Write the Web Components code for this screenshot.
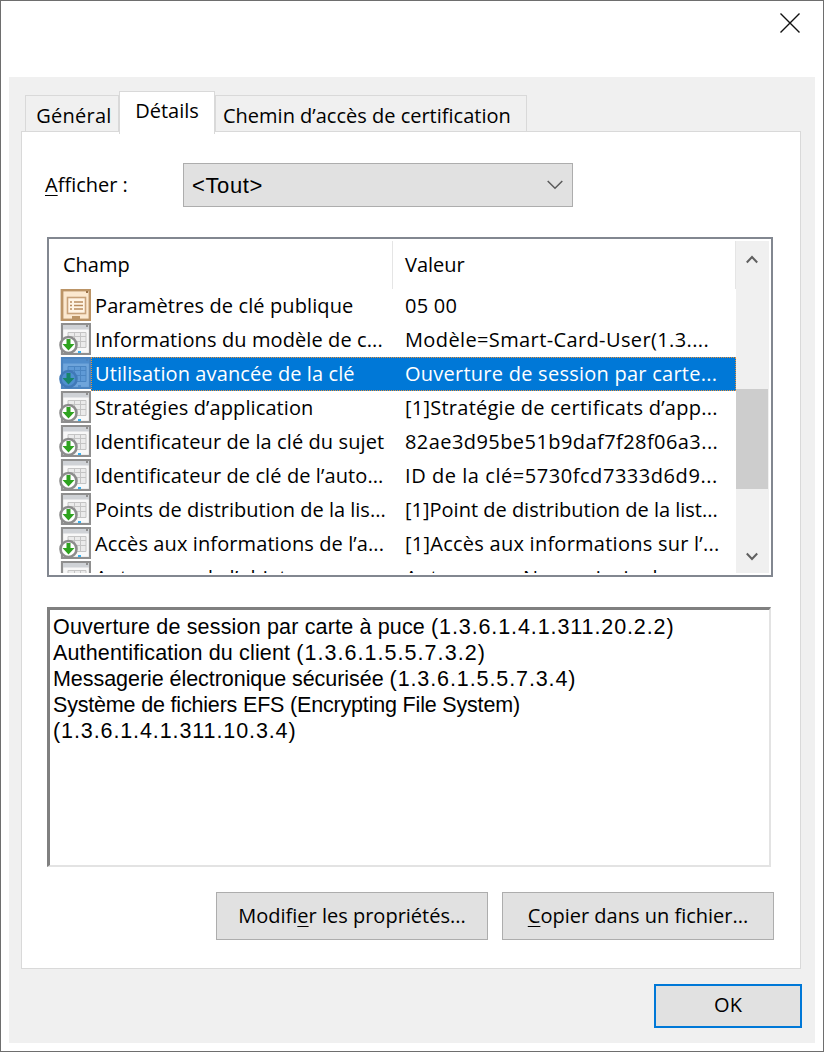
<!DOCTYPE html>
<html lang="fr"><head><meta charset="utf-8"><title>Certificat</title>
<style>
html,body{margin:0;padding:0;background:#fff;}
body{font-family:"Open Sans","Noto Sans",sans-serif;font-size:20px;color:#000;}
u{text-decoration-thickness:1px;text-underline-offset:3px;}
.n{letter-spacing:.9px;}
</style></head><body>
<template id="t-cert">
<style>
:host{display:block;width:824px;height:1052px;box-sizing:border-box;background:#fff;border:1px solid #6e6e6e;}
.title{height:76px;display:flex;justify-content:flex-end;align-items:flex-start;padding:12px 23px 0 0;box-sizing:border-box;}
.body{margin:0 8px;height:966px;background:#f0f0f0;box-sizing:border-box;padding:15px 14px 0 12px;display:flex;flex-direction:column;}
.footer{display:flex;justify-content:flex-end;margin-top:15px;margin-right:-1px;}
</style>
<div class="title"><svg width="20" height="20" viewBox="0 0 20 20"><path d="M.5.5l19 19M19.500.5l-19 19" stroke="#111" stroke-width="1.400" fill="none"/></svg></div>
<div class="body"><slot></slot><div class="footer"><slot name="footer"></slot></div></div>
</template>

<template id="t-tabs">
<style>
:host{display:flex;align-items:flex-end;height:40px;padding-left:4px;position:relative;z-index:1;margin-bottom:-1px;}
</style><slot></slot>
</template>

<template id="t-tab">
<style>
:host{display:flex;align-items:center;justify-content:center;box-sizing:border-box;height:36px;padding:3px 0 0 0;background:#f0f0f0;border:1px solid #d9d9d9;border-bottom:0;white-space:nowrap;margin-bottom:1px;}
:host([active]){height:43px;background:#fff;margin-bottom:-2px;padding:0 0 6px;position:relative;z-index:2;}
</style><slot></slot>
</template>

<template id="t-panel">
<style>
:host{display:block;box-sizing:border-box;height:838px;background:#fff;border:1px solid #d9d9d9;padding:31px 27px 0 25px;}
</style><slot></slot>
</template>

<template id="t-combo">
<style>
:host{display:flex;align-items:center;height:44px;margin-bottom:30px;}
.lab{width:138px;margin-left:-2px;flex:none;padding-bottom:2px;}
.box{width:390px;height:44px;box-sizing:border-box;background:#e1e1e1;border:1px solid #adadad;display:flex;align-items:center;justify-content:space-between;padding:2px 9px 0 8px;font:22px "Liberation Sans",Arial,sans-serif;letter-spacing:.6px;}
svg{margin-top:-2px;}
</style>
<span class="lab"><slot name="label"></slot></span>
<div class="box"><span><slot></slot></span>
<svg width="16" height="10" viewBox="0 0 16 10"><path d="M.7 1l7.300 7.300L15.300 1" fill="none" stroke="#5a5a5a" stroke-width="1.500"/></svg></div>
</template>

<template id="t-list">
<style>
:host{display:flex;box-sizing:border-box;width:726px;height:340px;border:2px solid #828790;padding:2px;margin-bottom:30px;background:#fff;overflow:hidden;}
.main{width:685px;flex:none;overflow:hidden;display:flex;flex-direction:column;}
.head{height:48px;flex:none;display:grid;grid-template-columns:342px 1fr;}
.head span{padding:0 0 2px 12px;box-sizing:border-box;height:48px;display:flex;align-items:center;border-right:1px solid #e5e5e5;}
.bar{width:33px;flex:none;background:#f0f0f0;position:relative;display:flex;flex-direction:column;justify-content:space-between;align-items:center;padding:14px 2px 12px 0;box-sizing:border-box;}
.thumb{position:absolute;left:0;top:148px;width:32px;height:100px;background:#cdcdcd;}
</style>
<div class="main"><div class="head"><span>Champ</span><span>Valeur</span></div><slot></slot></div>
<div class="bar">
<svg width="12" height="9" viewBox="0 0 12 9"><path d="M.8 7.500L6 2l5.200 5.500" fill="none" stroke="#606060" stroke-width="2"/></svg>
<div class="thumb"></div>
<svg width="12" height="9" viewBox="0 0 12 9"><path d="M.8 1.500L6 7l5.200-5.500" fill="none" stroke="#606060" stroke-width="2"/></svg>
</div>
</template>

<template id="t-row">
<style>
:host{display:block;height:34px;flex:none;color:#000;}
.r{display:grid;grid-template-columns:32px 1fr;height:34px;padding-left:8px;box-sizing:border-box;}
.ic{width:32px;height:32px;display:block;}
.txt{display:grid;grid-template-columns:300px 1fr;height:34px;align-items:center;padding:0 0 2px 4px;white-space:nowrap;box-sizing:border-box;letter-spacing:.1px;}
.txt span:last-child{padding-left:10px;letter-spacing:.25px;}
:host([selected]) .txt{background:#0078d7;color:#fff;outline:1px dotted #e8913a;outline-offset:-1px;}
</style>
<div class="r"><svg class="ic" viewBox="0 0 32 32"><g id="g"></g></svg>
<div class="txt"><span><slot name="f"></slot></span><span><slot name="v"></slot></span></div></div>
</template>

<template id="t-detail">
<style>
:host{display:block;box-sizing:border-box;width:724px;height:260px;background:#fff;border:solid;border-width:3px 2px 2px 3px;border-color:#808080 #e3e3e3 #e3e3e3 #808080;padding:4px 3px;font:21.5px/26px "Liberation Sans",Arial,sans-serif;margin-bottom:25px;}
</style><slot></slot>
</template>

<template id="t-actions">
<style>
:host{display:flex;justify-content:flex-end;gap:14px;margin-right:-1px;}
</style><slot></slot>
</template>

<template id="t-btn">
<style>
:host{display:flex;align-items:center;justify-content:center;box-sizing:border-box;width:272px;height:48px;background:#e1e1e1;border:1px solid #adadad;white-space:nowrap;padding-bottom:2px;}
:host([primary]){width:148px;height:44px;border:2px solid #0078d7;padding-bottom:3px;}
</style><slot></slot>
</template>

<cert-dialog>
  <cert-tabs>
    <cert-tab style="width:94px;letter-spacing:.25px;padding-left:4px">Général</cert-tab>
    <cert-tab active style="width:96px">Détails</cert-tab>
    <cert-tab style="width:312px;justify-content:flex-start;padding-left:7px">Chemin d’accès de certification</cert-tab>
  </cert-tabs>
  <cert-panel>
    <cert-combo><span slot="label"><u>A</u>fficher :</span>&lt;Tout&gt;</cert-combo>
    <field-list>
      <field-row kind="param"><span slot="f">Paramètres de clé publique</span><span slot="v">05 00</span></field-row>
      <field-row><span slot="f">Informations du modèle de c...</span><span slot="v" style="letter-spacing:.38px">Modèle=Smart-Card-User(1.3....</span></field-row>
      <field-row selected><span slot="f">Utilisation avancée de la clé</span><span slot="v">Ouverture de session par carte...</span></field-row>
      <field-row><span slot="f">Stratégies d’application</span><span slot="v">[1]Stratégie de certificats d’app...</span></field-row>
      <field-row><span slot="f">Identificateur de la clé du sujet</span><span slot="v" style="letter-spacing:.43px">82ae3d95be51b9daf7f28f06a3...</span></field-row>
      <field-row><span slot="f">Identificateur de clé de l’auto...</span><span slot="v" style="letter-spacing:.55px">ID de la clé=5730fcd7333d6d9...</span></field-row>
      <field-row><span slot="f" style="letter-spacing:0">Points de distribution de la lis...</span><span slot="v" style="letter-spacing:0">[1]Point de distribution de la list...</span></field-row>
      <field-row><span slot="f">Accès aux informations de l’a...</span><span slot="v">[1]Accès aux informations sur l’...</span></field-row>
      <field-row><span slot="f">Autre nom de l’objet</span><span slot="v">Autre nom : Nom principal=user...</span></field-row>
    </field-list>
    <detail-box><span style="letter-spacing:.17px">Ouverture de session par carte à puce</span> <span class="n">(1.3.6.1.4.1.311.20.2.2)</span><br><span style="letter-spacing:.16px">Authentification du client</span> <span class="n" style="letter-spacing:1.05px">(1.3.6.1.5.5.7.3.2)</span><br><span style="letter-spacing:-.05px">Messagerie électronique sécurisée</span> <span class="n">(1.3.6.1.5.5.7.3.4)</span><br><span style="letter-spacing:-.18px">Système de fichiers EFS (Encrypting File System)</span><br><span class="n">(1.3.6.1.4.1.311.10.3.4)</span></detail-box>
    <cert-actions><win-button><span>Modifi<u>e</u>r les propriétés...</span></win-button><win-button><span><u>C</u>opier dans un fichier...</span></win-button></cert-actions>
  </cert-panel>
  <win-button slot="footer" primary>OK</win-button>
</cert-dialog>

<script>
function simple(name,tid){customElements.define(name,class extends HTMLElement{constructor(){super();this.attachShadow({mode:'open'}).appendChild(document.getElementById(tid).content.cloneNode(true));}});}
[['cert-dialog','t-cert'],['cert-tabs','t-tabs'],['cert-tab','t-tab'],['cert-panel','t-panel'],['cert-combo','t-combo'],['field-list','t-list'],['detail-box','t-detail'],['cert-actions','t-actions'],['win-button','t-btn']].forEach(a=>simple(...a));
function certIcon(c){return `<rect x="3" y="1" width="28" height="30" fill="${c.paper}" stroke="${c.frame}" stroke-width="2.200"/><rect x="4" y="2" width="26" height="4.500" fill="${c.band}"/><rect x="27" y="2" width="2" height="2" fill="${c.frame}"/><path d="M9 9.500h18v15H9z" fill="${c.cell}" stroke="${c.line}"/><path d="M9 13.500h18M9 18.500h18M15.500 9.500v15M21.500 9.500v15" stroke="${c.line}"/><rect x="19" y="28" width="3" height="2" fill="${c.dot}"/><circle cx="9.500" cy="22" r="8" fill="${c.disc}" stroke="${c.ring}" stroke-width="2.600"/><path d="M7.500 16h4v5h4L9.500 27.500 3.500 21h4z" fill="${c.arrow}"/>`;}
const ICON_CERT=certIcon({paper:'#f8f8f8',frame:'#8f8f8f',band:'#cfd2d6',cell:'#ebebeb',line:'#c4c4c4',dot:'#39b0ee',disc:'#fff',ring:'#8c8c8c',arrow:'#2fa320'});
const ICON_SEL=certIcon({paper:'#6fa5db',frame:'#4c84bf',band:'#4f8ccb',cell:'#5f9ad6',line:'#4a85c2',dot:'#4f8ccb',disc:'#4f8fcf',ring:'#4079b8',arrow:'#17866a'});
const ICON_PARAM=`<rect x="3" y="1" width="28" height="30" fill="#fbe8cf" stroke="#bb9466" stroke-width="2.800"/><rect x="27" y="2" width="2" height="2" fill="#9a7348"/><rect x="8.500" y="8.500" width="18" height="16" fill="#fff4e4" stroke="#c8a27a" stroke-width="1.600"/><path d="M11 13h2M11 16.500h2M11 20h2M15 13h9M15 16.500h9M15 20h9" stroke="#b98c5e" stroke-width="1.600"/><path d="M13 27h8v4h-8z" fill="#bb9466"/>`;
customElements.define('field-row',class extends HTMLElement{constructor(){super();this.attachShadow({mode:'open'}).appendChild(document.getElementById('t-row').content.cloneNode(true));}
connectedCallback(){this.shadowRoot.getElementById('g').innerHTML=this.getAttribute('kind')==='param'?ICON_PARAM:this.hasAttribute('selected')?ICON_SEL:ICON_CERT;}});
</script>
</body></html>
